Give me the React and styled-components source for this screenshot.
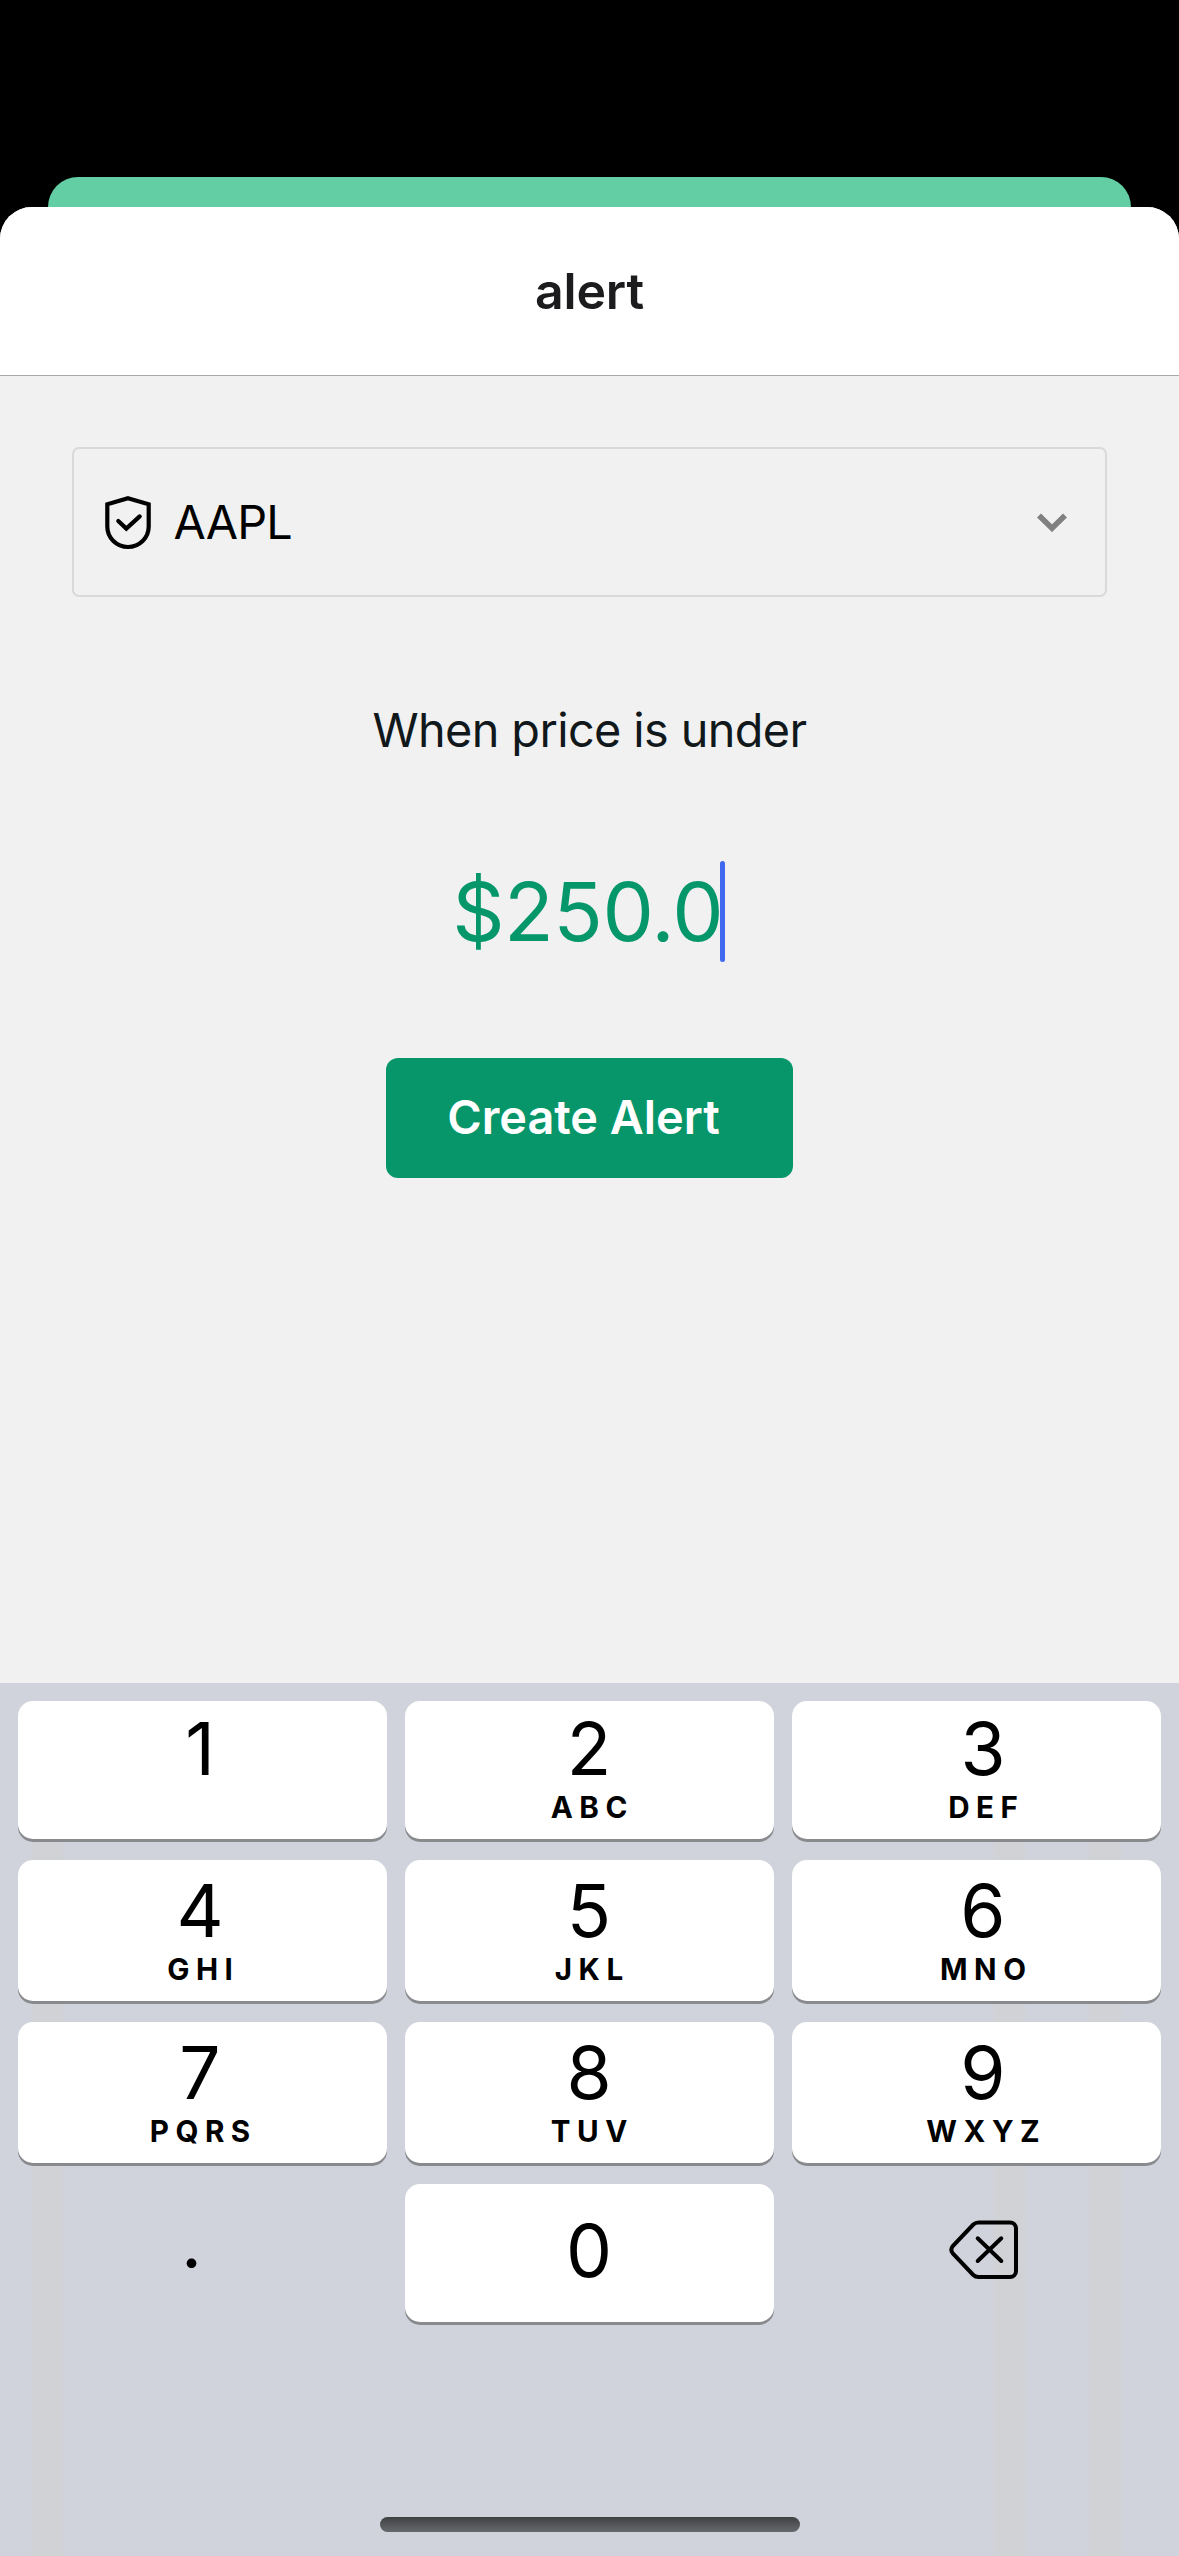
import React from "react";
import styled, { createGlobalStyle } from "styled-components";

const GlobalStyle = createGlobalStyle`
  * { box-sizing: border-box; }
  body {
    margin: 0;
    background: #000;
    font-family: Inter, "Liberation Sans", sans-serif;
  }
`;

const Screen = styled.div`
  display: flex;
  flex-direction: column;
  width: 1179px;
  height: 2556px;
  padding-top: 177px;
  background: #000;
  overflow: hidden;
`;

const BackCard = styled.div`
  flex: none;
  height: 68px;
  margin: 0 48px -38px;
  border-radius: 30px 30px 0 0;
  background: #63cda4;
`;

const Sheet = styled.div`
  position: relative;
  flex: 1;
  display: flex;
  flex-direction: column;
  border-radius: 32px 32px 0 0;
  background: #f1f1f1;
  overflow: hidden;
`;

const Header = styled.header`
  flex: none;
  display: flex;
  align-items: center;
  justify-content: center;
  height: 169px;
  border-bottom: 1px solid #a7a9a9;
  background: #fff;
`;

const Title = styled.h1`
  margin: 0;
  font-size: 50px;
  line-height: 60px;
  font-weight: 600;
  letter-spacing: -0.2px;
  color: #1c1c1e;
`;

const Form = styled.main`
  flex: 1;
  display: flex;
  flex-direction: column;
  align-items: center;
  padding: 71px 72px 0;
`;

const Select = styled.div`
  display: flex;
  align-items: center;
  align-self: stretch;
  height: 150px;
  padding: 0 37px 0 30px;
  border: 2px solid #d9d9d9;
  border-radius: 7px;
`;

const Symbol = styled.span`
  flex: 1;
  margin-left: 21.5px;
  font-size: 46.8px;
  line-height: 56px;
  letter-spacing: -0.8px;
  color: #000;
`;

const Prompt = styled.p`
  margin: 103px 0 0;
  font-size: 46.8px;
  line-height: 60px;
  letter-spacing: -0.6px;
  color: #11181c;
`;

const PriceField = styled.div`
  display: flex;
  align-items: center;
  height: 101px;
  margin-top: 101px;
  font-size: 81.6px;
  line-height: 101px;
  letter-spacing: -0.5px;
  color: #05976a;
`;

const Caret = styled.span`
  width: 5px;
  height: 101px;
  margin-left: -3.5px;
  margin-right: 2px;
  border-radius: 2.5px;
  background: #4169f0;
`;

const Submit = styled.button`
  width: 407px;
  height: 120px;
  margin-top: 96px;
  padding: 0 17px 2px 5px;
  border: 0;
  border-radius: 12px;
  background: #06966a;
  color: #fff;
  font-family: inherit;
  font-size: 46.8px;
  font-weight: 600;
  line-height: 60px;
  white-space: nowrap;
`;

const Keyboard = styled.section`
  flex: none;
  display: flex;
  flex-direction: column;
  justify-content: space-between;
  height: 873px;
  padding: 18px 18px 24px;
  background-color: #d0d3db;
  background-image: linear-gradient(
    90deg,
    transparent 31px, #d1d2d6 33px, #d1d2d6 62px, transparent 64px,
    transparent 993px, #d1d2d6 995px, #d1d2d6 1023px, transparent 1026px,
    transparent 1088px, #d1d2d6 1090px, #d1d2d6 1119px, transparent 1122px
  );
  background-repeat: no-repeat;
  background-position: 0 159px;
`;

const Keys = styled.div`
  display: grid;
  grid-template-columns: repeat(3, 369px);
  grid-template-rows: 138px 141px 141px 138px;
  gap: 21px 18px;
`;

const Key = styled.div`
  display: flex;
  flex-direction: column;
  align-items: center;
  padding-top: ${(p) => p.$top}px;
  padding-left: ${(p) => Math.max(p.$shift, 0)}px;
  padding-right: ${(p) => Math.max(-p.$shift, 0)}px;
  border-radius: 15px;
  background: ${(p) => (p.$plain ? "transparent" : "#fff")};
  box-shadow: ${(p) => (p.$plain ? "none" : "0 3px 0 #898a8d")};
  color: #000;
`;

const Digit = styled.span`
  font-size: 73px;
  line-height: 53px;
`;

const Letters = styled.span`
  margin-top: 22px;
  margin-right: -6.5px;
  font-size: 29.6px;
  font-weight: 700;
  line-height: 21px;
  letter-spacing: 6.5px;
`;

const HomeIndicator = styled.div`
  align-self: center;
  width: 420px;
  height: 15px;
  border-radius: 7.5px;
  background: linear-gradient(#3f4042, #68696c);
`;

const ShieldIcon = () => (
  <svg width="48" height="56" viewBox="0 -1 48 56" fill="none" stroke="#000" strokeWidth="4.2">
    <path d="M24 3.3 44.7 9.3V31.5A20.7 20.5 0 0 1 3.3 31.5V9.3Z" />
    <path d="M14.3 26 22.3 33.6 35.7 21.4" strokeLinecap="round" />
  </svg>
);

const ChevronIcon = () => (
  <svg width="32" height="20" viewBox="0 0 32 20" fill="none" stroke="#808080" strokeWidth="5.6">
    <path d="M3 3.4 16 16.2 29 3.4" />
  </svg>
);

const BackspaceIcon = () => (
  <svg width="72" height="64" viewBox="0 0 72 64" fill="none" stroke="#000" strokeWidth="4">
    <path d="M30.5 4.5H62a6 6 0 0 1 6 6V53a6 6 0 0 1-6 6H30.5Q27.5 59 25.3 57L4.8 35.5Q1.8 31.8 4.8 28L25.3 6.5Q27.5 4.5 30.5 4.5Z" />
    <path d="M29.7 20.3 53.3 43M53.3 20.3 29.7 43" strokeLinecap="round" />
  </svg>
);

const COLUMN_SHIFT = [-5, -1, 13];

const ROWS = [
  { top: 21, keys: [["1"], ["2", "ABC"], ["3", "DEF"]] },
  { top: 24, keys: [["4", "GHI"], ["5", "JKL"], ["6", "MNO"]] },
  { top: 24, keys: [["7", "PQRS"], ["8", "TUV"], ["9", "WXYZ"]] },
];

export default function App() {
  return (
    <>
      <GlobalStyle />
      <Screen>
        <BackCard />
        <Sheet>
          <Header>
            <Title>alert</Title>
          </Header>
          <Form>
            <Select>
              <ShieldIcon />
              <Symbol>AAPL</Symbol>
              <ChevronIcon />
            </Select>
            <Prompt>When price is under</Prompt>
            <PriceField>
              <span>$250.0</span>
              <Caret />
            </PriceField>
            <Submit>Create Alert</Submit>
          </Form>
          <Keyboard>
            <Keys>
              {ROWS.map((row) =>
                row.keys.map(([digit, letters], column) => (
                  <Key key={digit} $top={row.top} $shift={COLUMN_SHIFT[column]}>
                    <Digit>{digit}</Digit>
                    {letters && <Letters>{letters}</Letters>}
                  </Key>
                ))
              )}
              <Key $plain $top={31} $shift={-22}>
                <Digit>.</Digit>
              </Key>
              <Key $top={40} $shift={-1}>
                <Digit>0</Digit>
              </Key>
              <Key $plain $top={34} $shift={15}>
                <BackspaceIcon />
              </Key>
            </Keys>
            <HomeIndicator />
          </Keyboard>
        </Sheet>
      </Screen>
    </>
  );
}
